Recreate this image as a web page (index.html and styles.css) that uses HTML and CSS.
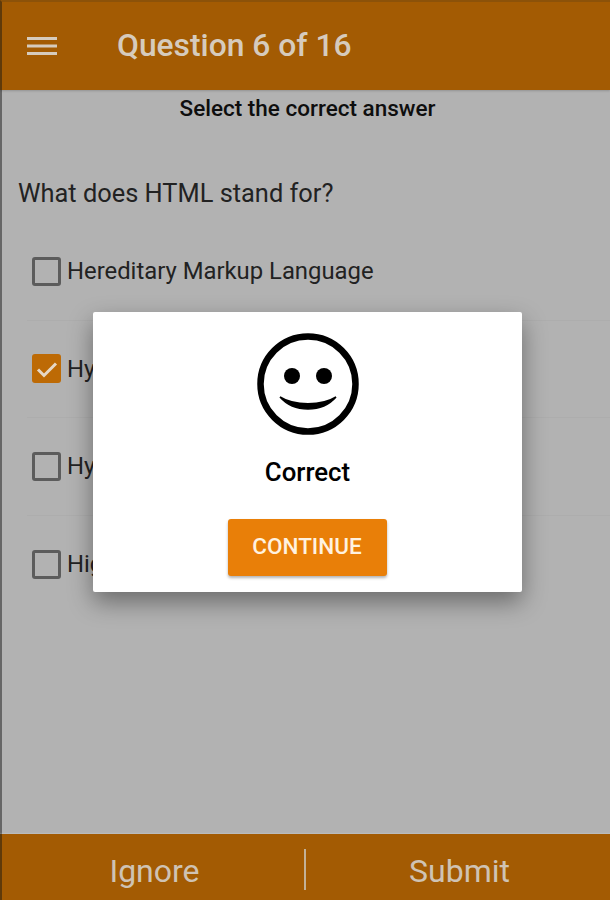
FILE: index.html
```html
<!DOCTYPE html>
<html lang="en">
<head>
<meta charset="utf-8">
<title>Question 6 of 16</title>
<link rel="stylesheet" href="styles.css">
</head>
<body>
<div class="screen">
  <header class="topbar">
    <svg class="menu" width="30" height="20" viewBox="0 0 30 20"><path d="M0 2.5H30M0 10H30M0 17.5H30" stroke="#d6cbbd" stroke-width="2.8" fill="none"/></svg>
    <h1 class="title">Question 6 of 16</h1>
  </header>
  <main class="content">
    <p class="hint">Select the correct answer</p>
    <p class="question">What does HTML stand for?</p>
    <ul class="options">
      <li class="option"><span class="box"></span><span>Hereditary Markup Language</span></li>
      <li class="option"><span class="box box-on"><svg width="28" height="28" viewBox="0 0 28 28"><path d="M5 14.5L11 20.5L23 8.5" stroke="#e6d8c6" stroke-width="3" fill="none"/></svg></span><span>Hyper Text Markup Language</span></li>
      <li class="option"><span class="box"></span><span>Hyper Tool Markup Language</span></li>
      <li class="option"><span class="box"></span><span>High Text Markup Language</span></li>
    </ul>
  </main>
  <footer class="bottombar">
    <div class="action">Ignore</div>
    <div class="sep"></div>
    <div class="action">Submit</div>
  </footer>
  <div class="dialog">
    <svg class="smiley" width="104" height="104" viewBox="0 0 104 104">
      <circle cx="52" cy="52" r="47.5" fill="none" stroke="#000" stroke-width="6.5"/>
      <circle cx="36" cy="44" r="8" fill="#000"/>
      <circle cx="68" cy="44" r="8" fill="#000"/>
      <path d="M24 65C38 81 66 81 80 65C66 74 38 74 24 65Z" fill="#000" stroke="#000" stroke-width="1.5"/>
    </svg>
    <div class="verdict">Correct</div>
    <button class="continue" type="button">CONTINUE</button>
  </div>
</div>
</body>
</html>
```

FILE: styles.css
```css
* { box-sizing: border-box; }
html, body { margin: 0; padding: 0; }
body { width: 610px; height: 900px; overflow: hidden; font-family: Roboto, "Liberation Sans", sans-serif; background: #b2b2b2; }
.screen { position: relative; width: 610px; height: 900px; display: flex; flex-direction: column; background: #b2b2b2; border-left: 2px solid #666; }
.topbar { height: 90px; flex: none; display: flex; align-items: center; margin-left: -2px; padding-left: 25px; padding-bottom: 1px; background: #a35b03; border-top: 2px solid #8c5209; border-left: 2px solid #5f3a0a; box-shadow: 0 1px 2px rgba(0,0,0,.18); }
.menu { flex: none; }
.title { margin: 0 0 0 60px; font-size: 31.8px; font-weight: 500; color: #d6cbbd; line-height: 1; }
.content { flex: 1; min-height: 0; }
.hint { margin: 6px 0 0; padding-left: 3px; text-align: center; font-size: 22.5px; font-weight: 500; color: #0e0e0e; line-height: 24px; }
.question { margin: 59px 0 0 16px; font-size: 25.4px; color: #222; line-height: 28px; }
.options { list-style: none; margin: 16px 0 0; padding: 0 0 0 25px; }
.option { height: 97.5px; display: flex; align-items: center; gap: 6px; font-size: 23.85px; color: #222; border-bottom: 1px solid #adadad; }
.option:last-child { border-bottom: 0; }
.box { width: 29px; height: 29px; margin-left: 5px; border: 3px solid #5c5c5c; border-radius: 3px; flex: none; }
.box-on { background: #bd6a05; border: 0; display: flex; align-items: center; justify-content: center; }
.bottombar { height: 66px; flex: none; display: flex; align-items: center; margin-left: -2px; padding-left: 2px; background: #a35b03; border-left: 2px solid #5f3a0a; color: #cfc3b4; font-size: 32px; box-shadow: 0 -1px 1px rgba(255,255,255,.12); }
.action { flex: 1; text-align: center; padding-top: 8px; }
.sep { width: 2px; height: 41px; margin: 8px 3px 4px -1px; background: #c3b197; flex: none; }
.dialog { position: absolute; left: 91px; top: 312px; width: 429px; height: 280px; background: #fff; border-radius: 2px; box-shadow: 0 10px 24px rgba(0,0,0,.4); display: flex; flex-direction: column; align-items: center; padding-top: 20px; }
.smiley { flex: none; display: block; }
.verdict { margin-top: 22px; font-size: 25.8px; font-weight: 500; color: #000; line-height: 28px; }
.continue { margin-top: 33px; margin-left: -1px; width: 159px; height: 57px; padding: 0 0 3px; border: 0; border-radius: 3px; background: #e97f08; color: #fff2e0; font-family: inherit; font-size: 22.5px; font-weight: 500; box-shadow: 0 2px 3px rgba(0,0,0,.3); }
```
